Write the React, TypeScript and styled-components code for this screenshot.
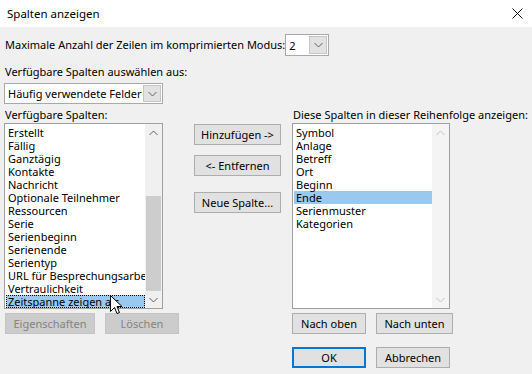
import React from 'react';
import styled, { createGlobalStyle, css } from 'styled-components';

const GlobalStyle = createGlobalStyle`
  html, body {
    margin: 0;
    padding: 0;
    background: #f0f0f0;
  }
  body {
    font-family: 'Noto Sans', 'Open Sans', sans-serif;
    font-size: 11px;
    color: #000;
  }
`;

const Window = styled.div`
  position: relative;
  width: 532px;
  height: 374px;
  display: flex;
  flex-direction: column;
  background: #f0f0f0;
  overflow: hidden;
`;

const TitleBar = styled.div`
  height: 27px;
  flex: 0 0 27px;
  background: #ffffff;
  display: flex;
  align-items: center;
  justify-content: space-between;
  padding: 0 9px 0 7px;
  font-size: 11.5px;
`;

const Body = styled.div`
  padding: 7px 0 0 4px;
  display: flex;
  flex-direction: column;
`;

const Row = styled.div`
  display: flex;
  align-items: center;
  height: 22px;
`;

const Label = styled.div<{ $width?: number; $top?: number }>`
  line-height: 14px;
  height: 14px;
  padding-left: 1px;
  white-space: nowrap;
  ${({ $width }) => $width && css`flex: 0 0 ${$width}px;`}
  ${({ $top }) => $top !== undefined && css`margin-top: ${$top}px;`}
`;

const Combo = styled.div<{ $width: number; $height: number; $top?: number }>`
  box-sizing: border-box;
  width: ${({ $width }) => $width}px;
  height: ${({ $height }) => $height}px;
  margin-top: ${({ $top }) => $top ?? 0}px;
  border: 1px solid #a9a9a9;
  background: #ffffff;
  display: flex;
  align-items: center;
  justify-content: space-between;
  padding: 0 1px 0 3px;
  white-space: nowrap;
`;

const DropButton = styled.div<{ $size: number }>`
  box-sizing: border-box;
  flex: 0 0 18px;
  height: ${({ $size }) => $size}px;
  background: #e2e2e2;
  border: 1px solid #c6c6c6;
  display: flex;
  align-items: center;
  justify-content: center;
`;

const Columns = styled.div`
  display: flex;
  margin-top: 4px;
`;

const Column = styled.div<{ $width: number; $left?: number }>`
  flex: 0 0 ${({ $width }) => $width}px;
  min-width: 0;
  margin-left: ${({ $left }) => $left ?? 0}px;
  display: flex;
  flex-direction: column;
`;

const ListBox = styled.div<{ $width: number }>`
  box-sizing: border-box;
  width: ${({ $width }) => $width}px;
  height: 186px;
  margin-top: 1px;
  border: 1px solid #a0a0a0;
  background: #ffffff;
  display: flex;
`;

const Items = styled.div`
  flex: 1;
  min-width: 0;
  padding: 2px 0 0 1px;
  overflow: hidden;
`;

const Item = styled.div<{ $selected?: boolean; $focused?: boolean }>`
  box-sizing: border-box;
  height: 13px;
  line-height: 13px;
  padding-left: 2px;
  white-space: nowrap;
  ${({ $selected }) => $selected && css`background: #99c9ef;`}
  ${({ $focused }) => $focused && css`outline: 1px dotted #000; outline-offset: -1px;`}
`;

const ScrollBar = styled.div<{ $disabled?: boolean }>`
  flex: 0 0 17px;
  position: relative;
  background: ${({ $disabled }) => ($disabled ? '#f4f4f4' : '#f0f0f0')};
  display: flex;
  flex-direction: column;
`;

const ScrollArrow = styled.div`
  height: 17px;
  display: flex;
  align-items: center;
  justify-content: center;
`;

const Track = styled.div`
  flex: 1;
  display: flex;
  flex-direction: column;
`;

const Thumb = styled.div<{ $top: number; $height: number }>`
  margin: ${({ $top }) => $top}px 1px 0;
  height: ${({ $height }) => $height}px;
  background: #cdcdcd;
`;

const ButtonRow = styled.div<{ $top: number; $left?: number }>`
  display: flex;
  gap: 10px;
  margin-top: ${({ $top }) => $top}px;
  margin-left: ${({ $left }) => $left ?? 0}px;
`;

const Button = styled.div<{ $width: number; $top?: number; $disabled?: boolean; $default?: boolean }>`
  box-sizing: border-box;
  flex: none;
  width: ${({ $width }) => $width}px;
  height: 21px;
  margin-top: ${({ $top }) => $top ?? 0}px;
  background: #e1e1e1;
  border: 1px solid #adadad;
  display: flex;
  align-items: center;
  justify-content: center;
  white-space: nowrap;
  ${({ $disabled }) =>
    $disabled &&
    css`
      background: #cccccc;
      border-color: #c4c4c4;
      color: #838383;
    `}
  ${({ $default }) =>
    $default &&
    css`
      border: 2px solid #0078d7;
    `}
`;

const Cursor = styled.svg`
  position: absolute;
  left: 110px;
  top: 295px;
`;

const Chevron: React.FC<{ up?: boolean; color: string }> = ({ up, color }) => (
  <svg width="9" height="6" viewBox="0 0 9 6">
    <polyline
      points={up ? '0.5,5 4.5,1 8.5,5' : '0.5,1 4.5,5 8.5,1'}
      fill="none"
      stroke={color}
      strokeWidth="1"
    />
  </svg>
);

const Scroll: React.FC<{ thumb?: [number, number]; color: string }> = ({ thumb, color }) => (
  <ScrollBar $disabled={!thumb}>
    <ScrollArrow>
      <Chevron up color={color} />
    </ScrollArrow>
    <Track>{thumb && <Thumb $top={thumb[0]} $height={thumb[1]} />}</Track>
    <ScrollArrow>
      <Chevron color={color} />
    </ScrollArrow>
  </ScrollBar>
);

const available = [
  'Erstellt',
  'Fällig',
  'Ganztägig',
  'Kontakte',
  'Nachricht',
  'Optionale Teilnehmer',
  'Ressourcen',
  'Serie',
  'Serienbeginn',
  'Serienende',
  'Serientyp',
  'URL für Besprechungsarbeitsbereich',
  'Vertraulichkeit',
  'Zeitspanne zeigen als',
];

const shown = ['Symbol', 'Anlage', 'Betreff', 'Ort', 'Beginn', 'Ende', 'Serienmuster', 'Kategorien'];

export default function App() {
  return (
    <Window>
      <GlobalStyle />
      <TitleBar>
        <span>Spalten anzeigen</span>
        <svg width="11" height="11" viewBox="0 0 11 11">
          <path d="M0.5 0.5 L10.5 10.5 M10.5 0.5 L0.5 10.5" stroke="#111" strokeWidth="1" />
        </svg>
      </TitleBar>
      <Body>
        <Row>
          <Label $width={278}>Maximale Anzahl der Zeilen im komprimierten Modus:</Label>
          <Combo $width={44} $height={22}>
            <span>2</span>
            <DropButton $size={18}>
              <Chevron color="#606060" />
            </DropButton>
          </Combo>
        </Row>
        <Label $top={9}>Verfügbare Spalten auswählen aus:</Label>
        <Combo $width={159} $height={21} $top={4}>
          <span>Häufig verwendete Felder</span>
          <DropButton $size={17}>
            <Chevron color="#606060" />
          </DropButton>
        </Combo>
        <Columns>
          <Column $width={159}>
            <Label>Verfügbare Spalten:</Label>
            <ListBox $width={159}>
              <Items>
                {available.map((name, i) => (
                  <Item key={name} $selected={i === available.length - 1} $focused={i === available.length - 1}>
                    {name}
                  </Item>
                ))}
              </Items>
              <Scroll thumb={[55, 95]} color="#606060" />
            </ListBox>
            <ButtonRow $top={4} $left={1}>
              <Button $width={90} $disabled>
                Eigenschaften
              </Button>
              <Button $width={74} $disabled>
                Löschen
              </Button>
            </ButtonRow>
          </Column>
          <Column $width={87} $left={31}>
            <Button $width={87} $top={16}>
              Hinzufügen -&gt;
            </Button>
            <Button $width={87} $top={10}>
              &lt;- Entfernen
            </Button>
            <Button $width={87} $top={16}>
              Neue Spalte...
            </Button>
          </Column>
          <Column $width={161} $left={11}>
            <Label>Diese Spalten in dieser Reihenfolge anzeigen:</Label>
            <ListBox $width={158}>
              <Items>
                {shown.map((name) => (
                  <Item key={name} $selected={name === 'Ende'}>
                    {name}
                  </Item>
                ))}
              </Items>
              <Scroll color="#c2c2c2" />
            </ListBox>
            <ButtonRow $top={4}>
              <Button $width={74}>Nach oben</Button>
              <Button $width={77}>Nach unten</Button>
            </ButtonRow>
            <ButtonRow $top={13}>
              <Button $width={74} $default>
                OK
              </Button>
              <Button $width={74}>Abbrechen</Button>
            </ButtonRow>
          </Column>
        </Columns>
      </Body>
      <Cursor width="13" height="21" viewBox="0 0 13 21">
        <path
          d="M0.5 0.5 L0.5 16.5 L4.5 12.5 L7 18.5 L9.5 17.5 L7 11.5 L12 11.5 Z"
          fill="#ffffff"
          stroke="#000000"
          strokeWidth="1"
          strokeLinejoin="miter"
        />
      </Cursor>
    </Window>
  );
}
